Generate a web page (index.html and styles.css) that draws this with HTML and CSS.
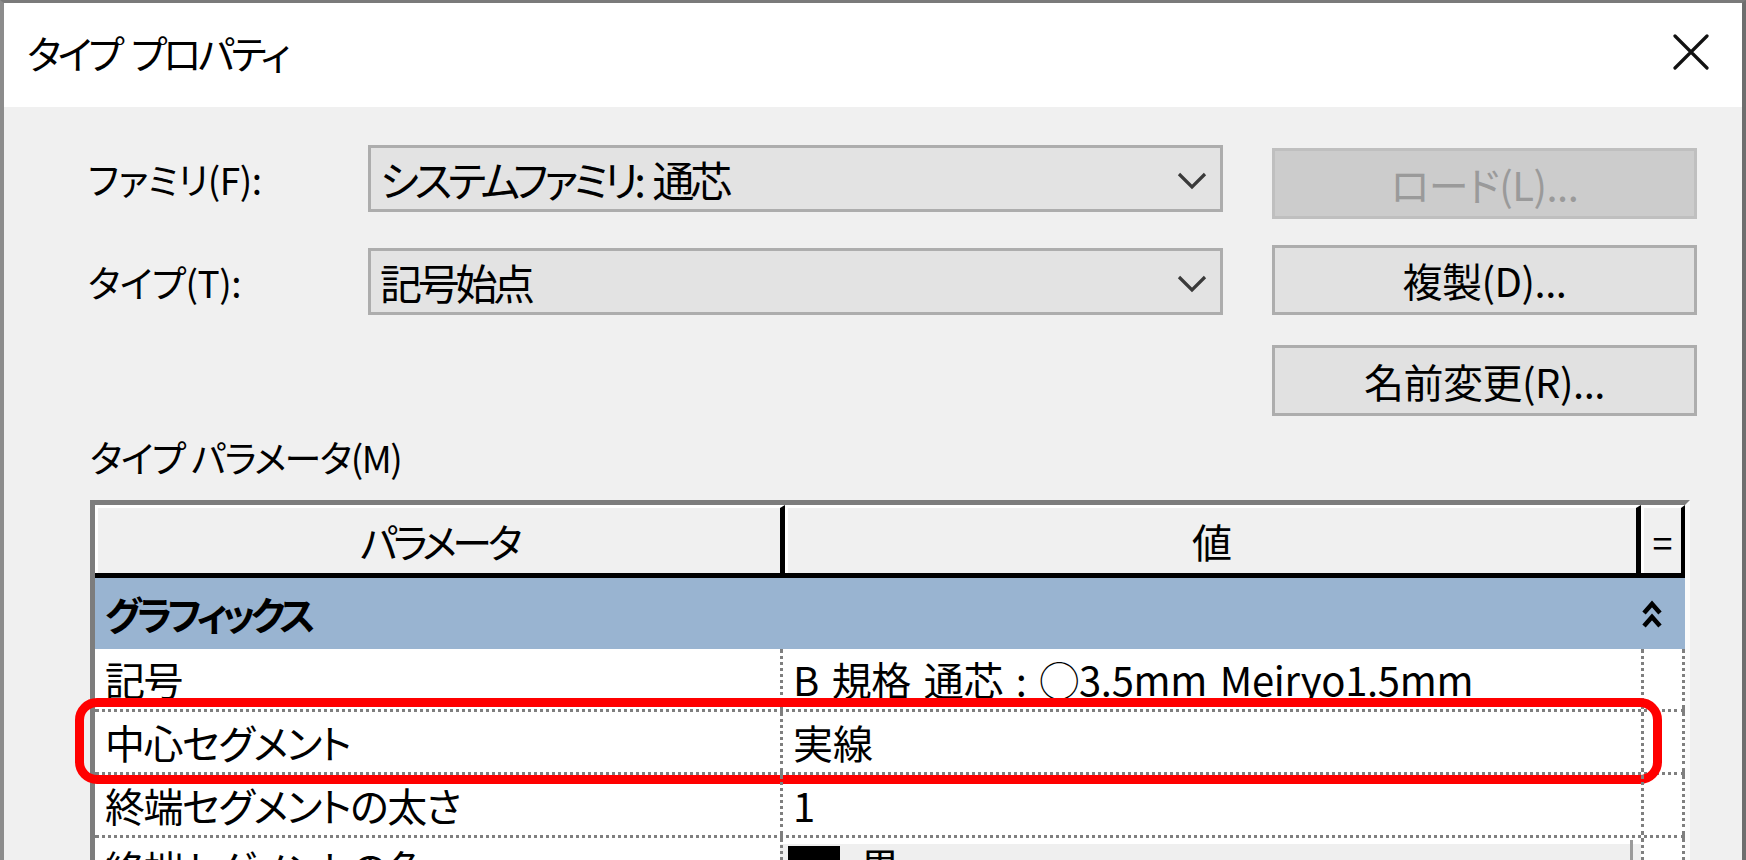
FILE: index.html
```html
<!DOCTYPE html>
<html lang="ja">
<head>
<meta charset="utf-8">
<title>タイプ プロパティ</title>
<link rel="stylesheet" href="styles.css">
</head>
<body>
<div class="window">
  <div class="titlebar">
    <span class="title">タイプ プロパティ</span>
    <svg class="close" width="36" height="36" viewBox="0 0 36 36"><path d="M2 2 L34 34 M34 2 L2 34" stroke="#111" stroke-width="3.2" fill="none" stroke-linecap="round"/></svg>
  </div>
  <div class="content">
    <div class="form">
      <div class="lbl r1">ファミリ(F):</div>
      <div class="combo r1">
        <span class="combo-text">システムファミリ: 通芯</span>
        <svg class="chev" width="30" height="18" viewBox="0 0 30 18"><path d="M2 2 L15 15 L28 2" stroke="#3a3a3a" stroke-width="3.2" fill="none"/></svg>
      </div>
      <button class="btn disabled r1" type="button">ロード(L)...</button>
      <div class="lbl r2">タイプ(T):</div>
      <div class="combo r2">
        <span class="combo-text">記号始点</span>
        <svg class="chev" width="30" height="18" viewBox="0 0 30 18"><path d="M2 2 L15 15 L28 2" stroke="#3a3a3a" stroke-width="3.2" fill="none"/></svg>
      </div>
      <button class="btn r2" type="button">複製(D)...</button>
      <button class="btn r3" type="button">名前変更(R)...</button>
    </div>
    <div class="sect-label">タイプ パラメータ(M)</div>
    <div class="ptable">
      <div class="thead">
        <div class="th th-param">パラメータ</div>
        <div class="th th-value">値</div>
        <div class="th th-eq">=</div>
      </div>
      <div class="group">
        <span class="group-name">グラフィックス</span>
        <svg class="collapse" width="22" height="30" viewBox="0 0 22 30"><path d="M3 14 L11 5 L19 14 M3 27 L11 18 L19 27" stroke="#000" stroke-width="4.5" fill="none"/></svg>
      </div>
      <div class="prow">
        <div class="pc pname">記号</div>
        <div class="pc pvalue pval-wide">B 規格 通芯 : ◯3.5mm Meiryo1.5mm</div>
        <div class="pc peq"></div>
      </div>
      <div class="prow">
        <div class="pc pname">中心セグメント</div>
        <div class="pc pvalue">実線</div>
        <div class="pc peq"></div>
        <div class="redbox"></div>
      </div>
      <div class="prow">
        <div class="pc pname">終端セグメントの太さ</div>
        <div class="pc pvalue">1</div>
        <div class="pc peq"></div>
      </div>
      <div class="prow">
        <div class="pc pname">終端セグメントの色</div>
        <div class="pc pvalue pcombo"><span class="swatch"></span><span class="swatch-name">黒</span><span class="edge"></span></div>
        <div class="pc peq"></div>
      </div>
    </div>
  </div>
</div>
</body>
</html>
```

FILE: styles.css
```css
html, body {
  margin: 0;
  padding: 0;
  background: #6b6b6b;
}

body {
  font-family: "Noto Sans CJK JP", "Noto Sans", sans-serif;
  color: #000;
  font-feature-settings: "palt";
}

.window {
  width: 1746px;
  height: 860px;
  box-sizing: border-box;
  border-top: 3px solid #7a7a7a;
  border-left: 4px solid #8c8c8c;
  border-right: 4px solid #6e6e6e;
  background: #f0f0f0;
  overflow: hidden;
  display: flex;
  flex-direction: column;
}

.titlebar {
  height: 104px;
  flex: none;
  box-sizing: border-box;
  background: #fff;
  display: flex;
  align-items: center;
  justify-content: space-between;
  padding: 0 33px 6px 23px;
}

.title {
  font-size: 39px;
  line-height: 1;
  letter-spacing: -3.5px;
  word-spacing: 5px;
}

.close {
  display: block;
}

.content {
  flex: 1;
  padding: 38px 0 0 84px;
  position: relative;
}

.form {
  display: grid;
  grid-template-columns: 231px 855px 425px;
  grid-template-rows: 100px 100px 71px;
  column-gap: 49px;
}

.r1 { grid-row: 1; }
.r2 { grid-row: 2; }
.r3 { grid-row: 3; grid-column: 3; }

.lbl {
  grid-column: 1;
  height: 67px;
  display: flex;
  align-items: center;
  font-size: 37px;
  letter-spacing: -0.5px;
}

.lbl.r2 { margin-top: 3px; }

.combo {
  grid-column: 2;
  height: 67px;
  box-sizing: border-box;
  border: 3px solid #adadad;
  background: #e3e3e3;
  display: flex;
  align-items: center;
  justify-content: space-between;
  padding: 4px 13px 0 9px;
}

.combo.r2 { margin-top: 3px; }

.combo-text {
  font-size: 42px;
  line-height: 1;
  letter-spacing: -4.3px;
  word-spacing: 6px;
  margin-top: -4px;
}

.chev { display: block; }

.btn {
  grid-column: 3;
  box-sizing: border-box;
  border: 3px solid #adadad;
  background: #e1e1e1;
  font-family: inherit;
  font-feature-settings: "palt";
  font-size: 40px;
  color: #000;
  padding: 0;
  margin: 0;
  height: 71px;
  display: flex;
  align-items: center;
  justify-content: center;
  letter-spacing: -0.5px;
}

.btn.r1 { margin-top: 3px; }
.btn.r2 { height: 70px; }

.btn.disabled {
  background: #cccccc;
  border-color: #bfbfbf;
  color: #9a9a9a;
}

.sect-label {
  margin-top: 22px;
  height: 38px;
  line-height: 38px;
  font-size: 37px;
  padding-left: 2px;
  letter-spacing: -1.5px;
}

.ptable {
  margin-top: 24px;
  margin-left: 2px;
  width: 1600px;
  box-sizing: border-box;
  border-top: 5px solid #7d7d7d;
  border-left: 5px solid #7d7d7d;
  border-right: 5px solid #fbfbfb;
  background: #fff;
}

.thead {
  display: grid;
  grid-template-columns: 690px 856px 44px;
  height: 73px;
  border-bottom: 5px solid #000;
  box-sizing: border-box;
  background: #f0f0f0;
}

.th {
  box-sizing: border-box;
  border-top: 3px solid #fff;
  border-left: 3px solid #fff;
  border-right: 5px solid #000;
  display: flex;
  align-items: center;
  justify-content: center;
  font-size: 40px;
  line-height: 1;
}

.th-param {
  letter-spacing: -4.5px;
}

.th-eq {
  font-size: 36px;
  border-right-width: 4px;
}

.group {
  height: 71px;
  background: #99b4d1;
  display: grid;
  grid-template-columns: 1546px 44px;
  align-items: center;
}

.group-name {
  font-size: 39px;
  font-weight: bold;
  padding-left: 10px;
  line-height: 1;
  letter-spacing: -5px;
}

.collapse {
  display: block;
  margin-left: 0;
}

.prow {
  position: relative;
  display: grid;
  grid-template-columns: 685px 861px 44px;
  height: 63px;
  box-sizing: border-box;
  border-bottom: 3px dotted #7f7f7f;
}

.pc {
  box-sizing: border-box;
  display: flex;
  align-items: center;
  font-size: 40px;
  line-height: 1;
  white-space: pre;
}

.pname {
  padding-left: 10px;
  letter-spacing: -1.5px;
}

.pvalue {
  border-left: 3px dotted #7f7f7f;
  padding-left: 10px;
}

.pval-wide {
  word-spacing: 4px;
  letter-spacing: -0.3px;
}

.peq {
  border-left: 3px dotted #7f7f7f;
  border-right: 3px dotted #7f7f7f;
}

.pcombo {
  padding-left: 0;
  background: linear-gradient(#fff 0, #fff 6px, #efefef 6px);
  position: relative;
}

.swatch {
  width: 52px;
  height: 50px;
  background: #000;
  margin: 8px 20px 0 5px;
  align-self: flex-start;
}

.swatch-name {
  align-self: flex-start;
  margin-top: 8px;
}

.edge {
  margin-left: auto;
  align-self: stretch;
  width: 4px;
  margin-top: 2px;
  margin-right: 4px;
  border-left: 3px solid #9a9a9a;
}

.redbox {
  position: absolute;
  left: -20px;
  top: -14px;
  width: 1587px;
  height: 86px;
  box-sizing: border-box;
  border: 9px solid #ff0000;
  border-radius: 22px;
  pointer-events: none;
}
```
